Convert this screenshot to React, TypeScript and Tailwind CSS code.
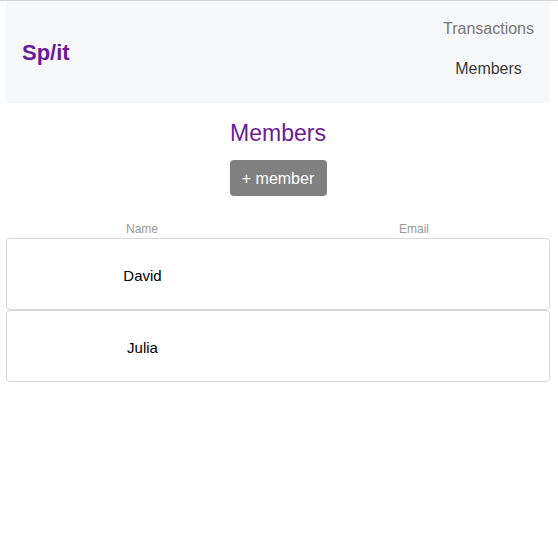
export default function App() {
  const members = [
    { name: "David", email: "" },
    { name: "Julia", email: "" },
  ];

  return (
    <div className="min-h-screen bg-white border-t border-[#d4d4d4] pl-[6px] pr-[8px] font-['Liberation_Sans',Arial,sans-serif]">
      {/* nav */}
      <nav className="flex h-[102px] items-center justify-between bg-[#f7f8fa] pl-4 pr-4">
        <div className="text-[22px] font-bold text-[#6a1b9a]">Sp/it</div>
        <div className="flex flex-col items-center gap-[16px] pb-[6px]">
          <a className="text-base text-[#777777]">Transactions</a>
          <a className="text-base text-[#3a3a3a]">Members</a>
        </div>
      </nav>

      <main className="flex flex-col items-center">
        <h1 className="mt-[16px] text-[23px] leading-[28px] text-[#6a1b9a]">Members</h1>
        <button className="mt-[13px] h-[36px] w-[97px] rounded bg-[#808080] pt-[2px] text-base text-white">
          + member
        </button>

        <div className="mt-[26px] w-full">
          <div className="grid grid-cols-2 text-center text-xs leading-[14px] text-[#999999]">
            <div>Name</div>
            <div>Email</div>
          </div>
          <div className="mt-[2px] flex flex-col">
            {members.map(m => (
              <div key={m.name} className="grid h-[72px] grid-cols-2 items-center rounded border border-[#d8d8d8] pt-1 text-center text-[15px] text-black">
                <div>{m.name}</div>
                <div>{m.email}</div>
              </div>
            ))}
          </div>
        </div>
      </main>
    </div>
  );
}
